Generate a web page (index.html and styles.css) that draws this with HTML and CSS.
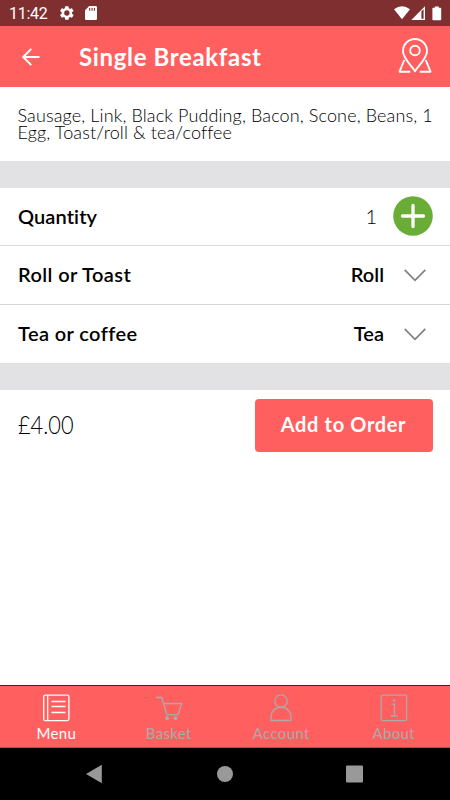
FILE: index.html
```html
<!DOCTYPE html>
<html lang="en">
<head>
<meta charset="utf-8">
<title>Single Breakfast</title>
<link rel="stylesheet" href="styles.css">
</head>
<body>
<div class="status">
  <span class="time">11:42</span>
  <svg class="gear" width="16" height="16" viewBox="0 0 24 24"><path fill="#fff" d="M19.4 13a7.500 7.500 0 0 0 0-2l2.200-1.700c.2-.2.2-.4.1-.6l-2.100-3.600c-.1-.2-.4-.3-.6-.2l-2.600 1a8 8 0 0 0-1.700-1l-.4-2.700a.5.5 0 0 0-.5-.4H9.700a.5.5 0 0 0-.5.400l-.4 2.700a8 8 0 0 0-1.700 1l-2.600-1c-.2-.1-.5 0-.6.2L1.800 8.700c-.1.2-.1.5.1.600L4.100 11a8 8 0 0 0 0 2l-2.200 1.700c-.2.2-.2.4-.1.600l2.100 3.600c.1.2.4.3.6.2l2.600-1a8 8 0 0 0 1.700 1l.4 2.700c0 .2.200.4.500.400h4.200c.3 0 .5-.2.5-.4l.4-2.700a8 8 0 0 0 1.700-1l2.600 1c.2.1.5 0 .6-.2l2.100-3.600c.1-.2.1-.5-.1-.6zM11.800 16a4 4 0 1 1 0-8 4 4 0 0 1 0 8z"/></svg>
  <svg class="sd" width="12" height="14" viewBox="0 0 12 14"><path fill="#fff" d="M4.200 0H10.800Q12 0 12 1.200V12.800Q12 14 10.800 14H1.200Q0 14 0 12.800V4.200Z"/><path stroke="#802f31" stroke-width="1.100" d="M4.700 2v2.800M7.100 2v2.800M9.400 2v2.800"/></svg>
  <svg class="signals" width="49" height="15" viewBox="0 0 49 15"><path fill="#fff" d="M0 3.200Q8 -2.600 16 3.200L8 13.200Z"/><path fill="#fff" d="M31 .2V14H17.300Z"/><path fill="#802f31" d="M27.400 5.300l2.200-2v9.400h-2.200Z"/><path fill="#fff" d="M40.800 .4h4v1.400h1.600q.8 0 .8.800v10.800q0 .8-.8.800h-7.200q-.8 0-.8-.8V2.600q0-.8.8-.8h1.600Z"/></svg>
</div>
<header class="header">
  <svg class="back" width="20" height="20" viewBox="0 0 20 20"><path fill="none" stroke="#fff" stroke-width="1.900" d="M19.500 10H3.500M11.300 1.900L3.200 10l8.100 8.100"/></svg>
  <h1 class="title">Single Breakfast</h1>
  <svg class="pin" width="36" height="36" viewBox="0 0 36 36"><g fill="none" stroke="#fff" stroke-width="1.900" stroke-linejoin="round"><path d="M18 33.200C14.500 27.500 6 20.500 6 13a12 12 0 0 1 24 0C30 20.500 21.500 27.500 18 33.200Z"/><circle cx="18" cy="12.500" r="4.800"/><path d="M7.300 22L2.500 33.700H13.200M28.700 22L33.500 33.700H22.800"/></g></svg>
</header>
<main class="main">
  <p class="desc">Sausage, Link, Black Pudding, Bacon, Scone, Beans, 1 Egg, Toast/roll &amp; tea/coffee</p>
  <div class="band"></div>
  <section class="options">
    <div class="row"><span class="label quantity">Quantity</span><span class="count">1</span>
      <svg class="plus" width="40" height="40" viewBox="0 0 40 40"><circle cx="20" cy="20" r="19.800" fill="#69ad36"/><path d="M20 9.500V30.500M9.500 20H30.500" stroke="#fff" stroke-width="3.300" stroke-linecap="round"/></svg></div>
    <div class="row"><span class="label">Roll or Toast</span><span class="value">Roll</span>
      <svg class="chevron" width="22" height="13" viewBox="0 0 22 13"><path d="M.7 .8L11 11.300 21.300 .8" fill="none" stroke="#808080" stroke-width="1.700"/></svg></div>
    <div class="row"><span class="label">Tea or coffee</span><span class="value">Tea</span>
      <svg class="chevron" width="22" height="13" viewBox="0 0 22 13"><path d="M.7 .8L11 11.300 21.300 .8" fill="none" stroke="#808080" stroke-width="1.700"/></svg></div>
  </section>
  <div class="band"></div>
  <div class="order"><span class="price">£4.00</span><button class="add">Add to Order</button></div>
</main>
<nav class="tabs">
  <div class="tab active"><svg width="28" height="28" viewBox="0 0 28 28"><g fill="none" stroke="currentColor" stroke-width="1.300"><rect x="1.700" y="1.200" width="25.200" height="25.400" rx="1.500"/><path d="M5.700 1v26M9.500 7.500h14M9.500 12.500h14M9.500 18.500h14"/></g></svg><span>Menu</span></div>
  <div class="tab"><svg width="28" height="28" viewBox="0 0 28 28"><g fill="none" stroke="currentColor" stroke-width="1.300"><path d="M1 3.500H6.800L11.800 20.700H23.200L26.700 9.500H8.500"/></g><circle cx="12.100" cy="24.200" r="1.900" fill="currentColor"/><circle cx="20.500" cy="24.200" r="1.900" fill="currentColor"/></svg><span>Basket</span></div>
  <div class="tab"><svg width="28" height="28" viewBox="0 0 28 28"><g fill="none" stroke="currentColor" stroke-width="1.300"><circle cx="14" cy="7" r="6.200"/><path d="M4 26.500V23a10 10 0 0 1 20 0v3.500Z"/></g></svg><span>Account</span></div>
  <div class="tab"><svg width="28" height="28" viewBox="0 0 28 28"><g fill="none" stroke="currentColor" stroke-width="1.300"><rect x="1.200" y="1.200" width="25.400" height="25.400" rx="1.500"/><path d="M11.300 10.200h3.200v11.600M11 22h6.500"/></g><circle cx="14" cy="6.600" r="1.300" fill="currentColor"/></svg><span>About</span></div>
</nav>
<footer class="system">
  <svg width="450" height="52" viewBox="0 0 450 52"><g fill="#999"><path d="M86 26L101.800 16.800V35.200Z"/><circle cx="225" cy="26" r="8"/><rect x="346" y="17.500" width="17" height="17" rx="1"/></g></svg>
</footer>
</body>
</html>
```

FILE: styles.css
```css
* { box-sizing: border-box; }
body {
  margin: 0;
  width: 450px;
  height: 800px;
  display: flex;
  flex-direction: column;
  overflow: hidden;
  background: #fff;
  color: #000;
  font-family: Lato, "Liberation Sans", sans-serif;
  font-variant-ligatures: none;
}
svg { display: block; flex: none; }
.status {
  height: 26px;
  flex: none;
  display: flex;
  align-items: center;
  padding: 0 7px 0 9px;
  background: #802f31;
  color: #fff;
}
.time { width: 50px; font: 400 16px/26px Roboto, sans-serif; letter-spacing: -0.3px; padding-top: 2px; }
.sd { margin-left: 10px; }
.signals { margin-left: auto; }
.header {
  height: 61px;
  flex: none;
  display: flex;
  align-items: center;
  padding: 0 17px 0 20px;
  background: #ff5f5f;
  color: #fff;
}
.title { margin: 0 0 0 39px; font-size: 24px; font-weight: 700; line-height: 30px; letter-spacing: 0.65px; }
.pin { margin-left: auto; margin-top: -1px; }
.main { flex: 1; }
.desc {
  margin: 0;
  height: 74px;
  padding: 20px 0 0 17.500px;
  font-size: 18px;
  font-weight: 300;
  line-height: 17px;
  letter-spacing: 0.12px;
}
.band { height: 27px; background: #e2e2e4; }
.row {
  height: 59px;
  display: flex;
  align-items: center;
  padding: 0 24px 0 18px;
  border-bottom: 1px solid #d8d8d8;
  font-size: 20px;
  font-weight: 600;
}
.row:first-child { height: 58px; padding-right: 17px; }
.row:last-child { height: 58px; border-bottom: 0; }
.label { letter-spacing: 0.4px; margin-top: -2px; }
.quantity { letter-spacing: 0.1px; }
.count { margin-left: auto; margin-top: -2px; font-weight: 300; }
.plus { margin-left: 16px; margin-top: -2px; }
.value { margin-left: auto; margin-top: -2px; }
.chevron { margin-left: 20px; margin-top: 1px; }
.order {
  display: flex;
  justify-content: space-between;
  align-items: center;
  padding: 9px 17.500px 0 18px;
}
.price {
  margin-top: -3px;
  font-size: 25px;
  font-weight: 300;
  transform: scaleX(0.87);
  transform-origin: left;
}
.add {
  width: 178px;
  height: 52.500px;
  padding: 0 0 2px;
  border: 0;
  border-radius: 4px;
  background: #ff5f5f;
  color: #fff;
  font-family: inherit;
  font-size: 20px;
  font-weight: 700;
  letter-spacing: 0.65px;
}
.tabs {
  height: 63px;
  flex: none;
  display: grid;
  grid-template-columns: repeat(4, 1fr);
  border-top: 1px solid #33292c;
  border-bottom: 1px solid #b84848;
  background: #ff5f5f;
  color: #aaa;
}
.tab {
  display: flex;
  flex-direction: column;
  align-items: center;
  padding-top: 8px;
  font-size: 15px;
  line-height: 20px;
  letter-spacing: 0.35px;
}
.tab span { margin-top: 1px; }
.active { color: #fff; }
.system { height: 52px; flex: none; background: #000; }
```
